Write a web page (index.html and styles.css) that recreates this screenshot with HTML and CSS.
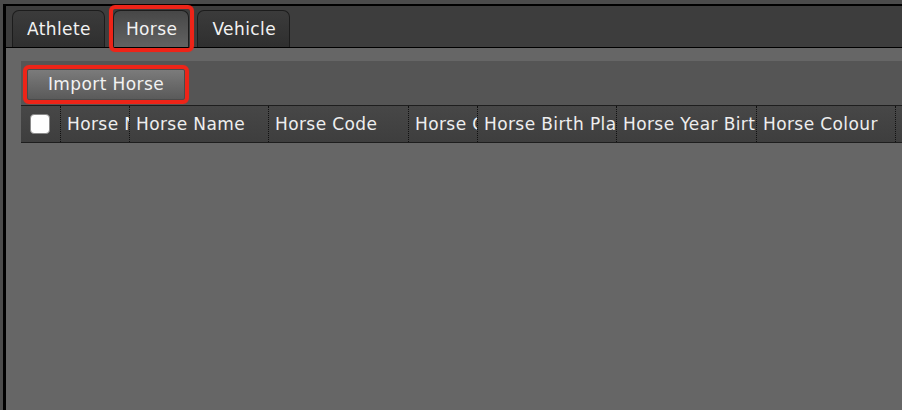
FILE: index.html
```html
<!DOCTYPE html>
<html>
<head>
<meta charset="utf-8">
<link rel="stylesheet" href="styles.css">
</head>
<body>
<div class="frame">
  <div class="tabbar">
    <div class="tab">Athlete</div>
    <div class="tab active highlight">Horse</div>
    <div class="tab">Vehicle</div>
  </div>
  <div class="content">
    <div class="panel">
      <div class="toolbar">
        <button class="btn highlight">Import Horse</button>
      </div>
      <div class="header">
        <div class="cell check"><span class="checkbox"></span></div>
        <div class="cell">Horse Number</div>
        <div class="cell">Horse Name</div>
        <div class="cell">Horse Code</div>
        <div class="cell">Horse Gender</div>
        <div class="cell">Horse Birth Place</div>
        <div class="cell">Horse Year Birth</div>
        <div class="cell">Horse Colour</div>
        <div class="cell last"></div>
      </div>
    </div>
  </div>
</div>
</body>
</html>
```

FILE: styles.css
```css
* { box-sizing: border-box; }
html, body { margin: 0; padding: 0; }
body {
  width: 902px;
  height: 410px;
  overflow: hidden;
  background: #4b4b4b;
  font-family: "DejaVu Sans", Verdana, sans-serif;
  font-size: 17px;
  letter-spacing: 0.4px;
  color: #f0f0f0;
}
.frame {
  margin: 4px 0 0 3px;
  height: 406px;
  border-top: 2px solid #000;
  border-left: 3px solid #000;
  display: flex;
  flex-direction: column;
}
.tabbar {
  height: 42px;
  background: #3d3d3d;
  border-bottom: 1px solid #000;
  display: flex;
  align-items: flex-end;
  gap: 8px;
  padding-left: 6px;
}
.tab {
  position: relative;
  height: 37px;
  padding: 0 13px 0 14px;
  display: flex;
  align-items: center;
  border: 1px solid #1c1c1c;
  border-bottom: none;
  border-radius: 7px 7px 0 0;
  background: linear-gradient(#3b3b3b, #2f2f2f);
  color: #f2f2f2;
}
.tab.active {
  padding: 0 11px 0 12px;
  background: linear-gradient(#474747, #626262);
}
.highlight::after {
  content: "";
  position: absolute;
  border: 4px solid #ee2418;
  border-radius: 6px;
  box-shadow: 0 0 1px rgba(238, 36, 24, 0.6);
  pointer-events: none;
}
.tab.highlight::after {
  top: -6px; left: -5px; right: -6px; bottom: -5px;
}
.content {
  flex: 1;
  background: #666;
  padding: 13px 0 0 15px;
}
.panel { display: flex; flex-direction: column; }
.toolbar {
  height: 44px;
  background: #555;
  padding: 8px 0 0 6px;
  display: flex;
  align-items: flex-start;
}
.btn {
  position: relative;
  width: 158px;
  height: 31px;
  font: inherit;
  letter-spacing: 0.4px;
  color: #f2f2f2;
  border: 1px solid #4a4a4a;
  border-radius: 2px;
  background: linear-gradient(#7b7b7b, #5a5a5a);
  padding: 0 0 2px 0;
}
.btn.highlight::after {
  top: -5px; left: -5px; right: -5px; bottom: -5px;
}
.header {
  height: 38px;
  border-top: 1px solid #1e1e1e;
  border-bottom: 1px solid #1e1e1e;
  background: linear-gradient(#474747, #3e3e3e);
  display: grid;
  grid-template-columns: 40px 69px 139px 140px 69px 139px 140px 139px 1fr;
}
.cell {
  border-right: 1px dotted #111;
  padding-left: 6px;
  white-space: nowrap;
  overflow: hidden;
  display: flex;
  align-items: center;
  color: #eeeeee;
}
.cell.last { border-right: none; }
.cell.check {
  padding-left: 9px;
}
.checkbox {
  width: 20px;
  height: 20px;
  background: #fff;
  border: 1px solid #8a8a8a;
  border-radius: 4px;
}
```
